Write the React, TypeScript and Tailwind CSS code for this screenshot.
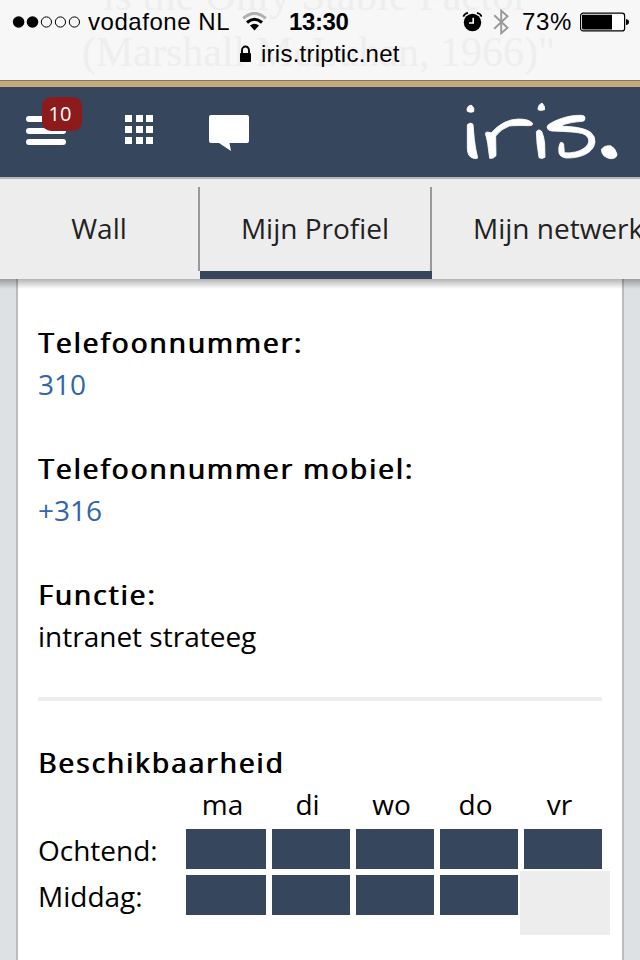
import type { ReactNode } from "react";

const days = ["ma", "di", "wo", "do", "vr"];

function StatusBar() {
  return (
    <div className="relative h-20 overflow-hidden bg-[#f7f7f7] font-['Liberation_Sans',Arial,sans-serif] text-black">
      {/* Page text showing through the translucent browser bar */}
      <div className="absolute inset-0 font-['Liberation_Serif',serif] text-[42px] leading-[48px] text-[#eeeeee]">
        <div className="absolute left-[103px] top-[-28px] whitespace-nowrap tracking-[0.3px]">is the Only Stable Factor</div>
        <div className="absolute left-[82px] top-[28px] whitespace-nowrap">(Marshall McLuhan, 1966)"</div>
      </div>
      <div className="relative flex h-[43px] items-center text-[24px] leading-[43px]">
        <svg className="ml-3 h-[14px] w-[70px]" viewBox="0 0 70 14">
          <circle cx="6.6" cy="7" r="5.8" />
          <circle cx="20.5" cy="7" r="5.8" />
          <g fill="none" stroke="#000" strokeWidth="1">
            <circle cx="34.4" cy="7" r="5.1" />
            <circle cx="48.4" cy="7" r="5.1" />
            <circle cx="62.4" cy="7" r="5.1" />
          </g>
        </svg>
        <span className="ml-[6px] w-[154px] whitespace-nowrap tracking-[0.55px]">vodafone NL</span>
        <svg className="h-[20px] w-[25px]" viewBox="0 0 25 20">
          <path d="M1.2 6.4Q12.5-3.7 23.8 6.4" fill="none" stroke="#b0b0b0" strokeWidth="3" />
          <path d="M5 10.5Q12.5 4 20 10.5" fill="none" stroke="#000" strokeWidth="3" />
          <path d="M8 13.6Q12.5 10 17 13.6L12.5 18.6Z" />
        </svg>
        <span className="ml-[22px] w-[173px] font-bold tracking-[-0.4px]">13:30</span>
        <svg className="h-[20px] w-[20px]" viewBox="0 0 20 20">
          <circle cx="10.5" cy="10.5" r="8.7" />
          <path d="M1.3 4.6Q2.5 1.5 6 .8M19.7 4.6Q18.5 1.5 15 .8" fill="none" stroke="#000" strokeWidth="1.7" />
          <path d="M11.2 5.7v5.3H7" fill="none" stroke="#fff" strokeWidth="1.6" />
        </svg>
        <svg className="ml-[11px] h-[26px] w-[17px]" viewBox="0 0 17 26">
          <path d="M1.2 6.3 14.5 18.7 8.2 24.3V1.7L14.5 7.3 1.2 19.7" fill="none" stroke="#999" strokeWidth="1.9" />
        </svg>
        <span className="ml-3 w-[58px] tracking-[0.7px]">73%</span>
        <svg className="h-[20px] w-[50px]" viewBox="0 0 50 20">
          <rect x=".6" y="1.2" width="44" height="17.7" rx="2.5" fill="#fff" stroke="#000" strokeWidth="1.2" />
          <path d="M2 2.7h30v14.8H3.5Q2 17.5 2 16Z" />
          <path d="M46 7q3 .5 3 3t-3 3Z" />
        </svg>
      </div>
      <div className="relative flex h-[22px] items-center pl-[240px] text-[24px] leading-[22px]">
        <svg className="h-[18px] w-[11px]" viewBox="0 0 11 18">
          <path d="M2 9V5.3a3.5 3.8 0 0 1 7 0V9" fill="none" stroke="#000" strokeWidth="1.9" />
          <rect y="8" width="11" height="9" rx=".7" />
        </svg>
        <span className="ml-[10px] tracking-[0.25px]">iris.triptic.net</span>
      </div>
    </div>
  );
}

function Header() {
  return (
    <header className="flex h-[90px] items-start bg-[#36465d]">
      <div className="relative ml-[26px] mt-[10px] h-[50px] w-[99px]">
        <div className="flex flex-col gap-[5.5px] pt-[19px]">
          <i className="h-[6px] w-10 rounded-full bg-white" />
          <i className="h-[6px] w-10 rounded-full bg-white" />
          <i className="h-[6px] w-10 rounded-full bg-white" />
        </div>
        <span className="absolute left-4 top-0 flex h-[34px] w-10 items-center justify-center rounded-[9px] bg-[#8e1b1b] pr-1 font-['Open_Sans',sans-serif] text-[20px] leading-none text-white">
          10
        </span>
      </div>
      <div className="mt-7 grid w-7 grid-cols-3 gap-x-[3.5px] gap-y-[3.5px]">
        {Array.from({ length: 9 }, (_, i) => (
          <i key={i} className="h-[7.3px] bg-white" />
        ))}
      </div>
      <svg className="ml-14 mt-7 h-[36px] w-10" viewBox="0 0 40 36" fill="#fff">
        <path d="M2 0H38Q40 0 40 2V26Q40 28 38 28H20.5L22 36 10 28H2Q0 28 0 26V2Q0 0 2 0Z" />
      </svg>
      <svg className="ml-[191px] h-[90px] w-[200px]" viewBox="0 21 600 270" fill="#fff" stroke="#fff" strokeWidth="2.5" strokeLinejoin="round">
        <path d="M81 87Q84 75 95 76Q105 84 101 95Q90 99 82 94Z" />
        <path d="M82 134Q91 125 99 133L103 178Q106 205 113 234Q110 237 100 235Q82 230 82 205Z" />
        <path d="M136 161Q137 153 147 157L154 158Q190 118 235 117Q268 117 278 130Q279 137 268 137Q225 136 208 138Q183 147 167 168L168 227Q160 237 149 235L143 190Q140 172 136 161Z" />
        <path d="M294 85Q295 74 306 69Q315 77 314 89Q304 93 295 90Z" />
        <path d="M289 155Q296 145 305 154Q312 170 314 190L315 232Q306 238 297 233L291 190Z" />
        <path d="M321 141Q322 134 335 128C360 115 390 105 424 106Q435 106 435 114Q435 123 428 124C405 125 382 130 367 135Q366 138 371 139C408 140 437 146 452 157Q466 169 465 186Q463 204 450 214C433 228 406 235 378 234Q360 231 357 219Q354 200 361 188Q367 185 371 192L373 218Q388 220 406 216C430 210 447 196 446 182Q446 168 428 161Q408 155 334 153Q321 150 321 141Z" />
        <path d="M484 209Q491 196 512 197Q527 205 531 223Q530 237 510 236Q485 230 484 209Z" />
      </svg>
    </header>
  );
}

function Tabs() {
  return (
    <nav className="relative z-10 flex h-[102px] overflow-hidden border-t-2 border-[#b5b7ba] bg-[#ededed] text-[#222]">
      <div className="flex w-[198px] shrink-0 justify-center leading-[99px]">Wall</div>
      <div className="mt-2 h-[84px] w-0.5 shrink-0 bg-[#999]" />
      <div className="flex h-[100px] w-[232px] shrink-0 flex-col border-b-8 border-[#36465d]">
        <div className="mt-2 h-[84px] border-r-2 border-[#999] text-center leading-[83px]">Mijn Profiel</div>
      </div>
      <div className="shrink-0 whitespace-nowrap pl-[41px] leading-[99px]">Mijn netwerk</div>
    </nav>
  );
}

function Field({ label, children }: { label: string; children: ReactNode }) {
  return (
    <div className="mb-[42px]">
      <div className="whitespace-nowrap tracking-[2px] [text-shadow:1px_0_0_#000]">{label}</div>
      <div>{children}</div>
    </div>
  );
}

function Cells({ count }: { count: number }) {
  return (
    <>
      {days.slice(0, count).map((d) => (
        <div key={d} className="h-10 bg-[#36465d]" />
      ))}
    </>
  );
}

export default function App() {
  return (
    <div className="flex h-[960px] w-[640px] flex-col overflow-hidden bg-[#dde1e4] font-['Open_Sans',sans-serif] text-[28px] leading-[42px] text-black">
      <StatusBar />
      <div className="h-[7px] shrink-0 border-t border-[#8a7556] bg-[#c4aa7e]" />
      <Header />
      <div className="relative shrink-0">
        <Tabs />
        <div className="absolute inset-x-0 top-full h-[10px] bg-linear-to-b from-black/30 to-transparent" />
      </div>
      <main className="mx-4 flex-1 border-x-2 border-[#bbb] bg-white px-5 pt-[42px]">
        <Field label="Telefoonnummer:">
          <span className="text-[#3164aa]">310</span>
        </Field>
        <Field label="Telefoonnummer mobiel:">
          <span className="text-[#3164aa]">+316</span>
        </Field>
        <Field label="Functie:">intranet strateeg</Field>
        <div className="-mt-0.5 h-1 bg-[#ededed]" />
        <h2 className="mt-10 tracking-[2px] [text-shadow:1px_0_0_#000]">Beschikbaarheid</h2>
        <div className="grid grid-cols-[142px_80px_78px_78px_78px_78px] gap-x-1.5">
          <span />
          {days.map((d) => (
            <span key={d} className="h-[46px] pr-[7px] text-center">{d}</span>
          ))}
          <span className="h-[46px]">Ochtend:</span>
          <Cells count={5} />
          <span>Middag:</span>
          <Cells count={4} />
          <div className="-ml-1 -mt-1 h-16 w-[90px] bg-[#ededed]" />
        </div>
      </main>
    </div>
  );
}
